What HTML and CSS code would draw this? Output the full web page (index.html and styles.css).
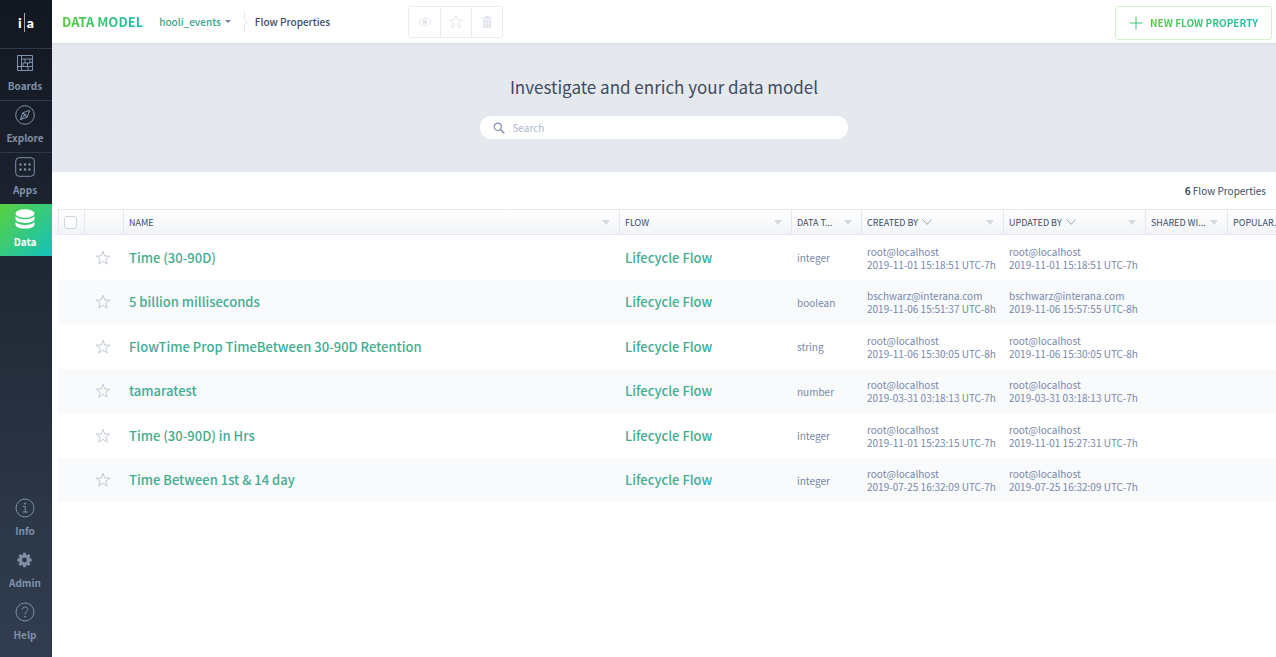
FILE: index.html
```
<!DOCTYPE html>
<html lang="en">
<head>
    <meta charset="UTF-8">
    <meta name="viewport" content="width=device-width, initial-scale=1.0">
    <title>Data Model - Flow Properties</title>
    <link rel="stylesheet" href="styles.css">
</head>
<body>
    <svg class="defs" aria-hidden="true">
        <symbol id="star" viewBox="0 0 16 16">
            <path d="M8 1.2l1.700 4.800 5.100.1-4 3.100 1.400 5L8 11.300l-4.200 2.900 1.400-5-4-3.100 5.100-.1z" fill="none" stroke="currentColor" stroke-width=".9"/>
        </symbol>
        <symbol id="chevron" viewBox="0 0 10 6">
            <path d="M.5.5L5 5.300 9.500.5" fill="none" stroke="currentColor" stroke-width=".9"/>
        </symbol>
        <linearGradient id="plus-fill" gradientUnits="userSpaceOnUse" x1="0" y1="0" x2="14" y2="14">
            <stop offset="0" stop-color="#5fd04a"/>
            <stop offset="1" stop-color="#1fbdb0"/>
        </linearGradient>
    </svg>

    <nav class="sidebar">
        <a class="logo" href="#" aria-label="Home">i<span class="logo-bar"></span>a</a>
        <a class="nav-item" href="#">
            <svg class="nav-icon" viewBox="0 0 20 20" fill="none" stroke="currentColor" stroke-width="1">
                <path d="M2.500 2.500h15v15h-15zM6.500 2.500v15M6.500 6h11M2.500 13.500h15M10 6v4h5V6M12.500 10v3.500M8 13.500V10h2M13 13.500v4M15 9.500h2.500"/>
            </svg>
            <span>Boards</span>
        </a>
        <a class="nav-item" href="#">
            <svg class="nav-icon" viewBox="0 0 20 20" fill="none" stroke="currentColor" stroke-width="1">
                <circle cx="10" cy="10" r="9.300"/>
                <path d="M14.700 5.300l-2.500 6.900-6.900 2.500 2.500-6.900zM7.800 7.800l4.400 4.400M5.300 14.700l4-4"/>
                <circle cx="10" cy="10" r="1"/>
            </svg>
            <span>Explore</span>
        </a>
        <a class="nav-item" href="#">
            <svg class="nav-icon" viewBox="0 0 20 20" fill="none" stroke="currentColor" stroke-width="1">
                <rect x=".7" y=".7" width="18.600" height="18.600" rx="3.500"/>
                <path d="M5.500 7.500h.01M10 7.500h.01M14.500 7.500h.01M5.500 12.500h.01M10 12.500h.01M14.500 12.500h.01" stroke-width="2.400" stroke-linecap="round"/>
            </svg>
            <span>Apps</span>
        </a>
        <a class="nav-item active" href="#">
            <svg class="nav-icon" viewBox="0 0 20 20" fill="currentColor">
                <ellipse cx="10" cy="4.500" rx="9.500" ry="4.300"/>
                <path d="M.5 7.300c1.600 2 5.300 3 9.500 3s7.900-1 9.500-3v2.400c0 2.400-4.300 4.200-9.500 4.200S.5 12.100.5 9.700z"/>
                <path d="M.5 13c1.600 2 5.300 3 9.500 3s7.900-1 9.500-3v2.400c0 2.400-4.300 4.200-9.500 4.200S.5 17.800.5 15.400z"/>
            </svg>
            <span>Data</span>
        </a>
        <div class="spacer"></div>
        <a class="nav-item plain" href="#">
            <svg class="nav-icon" viewBox="0 0 20 20" fill="none" stroke="currentColor" stroke-width="1">
                <circle cx="10" cy="10" r="9"/>
                <path d="M8 8.500h2.300v5.500M7.500 14h5.300"/>
                <circle cx="10" cy="5.700" r=".6" fill="currentColor"/>
            </svg>
            <span>Info</span>
        </a>
        <a class="nav-item plain" href="#">
            <svg class="nav-icon" viewBox="0 0 20 20">
                <circle cx="9.500" cy="10" r="4" fill="none" stroke="currentColor" stroke-width="3.200"/>
                <path d="M9.500 2.800v3M9.500 14.200v3M2.300 10h3M13.700 10h3M4.400 4.900l2 2M12.600 13.100l2 2M4.400 15.100l2-2M12.600 6.900l2-2" stroke="currentColor" stroke-width="2.800"/>
            </svg>
            <span>Admin</span>
        </a>
        <a class="nav-item plain" href="#">
            <svg class="nav-icon" viewBox="0 0 20 20" fill="none" stroke="currentColor" stroke-width="1">
                <circle cx="10" cy="10" r="9"/>
                <path d="M7.200 7.800c0-1.800 1.200-2.800 2.800-2.800s2.800 1 2.800 2.500c0 2-2.800 2-2.800 4.500"/>
                <circle cx="10" cy="14.500" r=".5" fill="currentColor"/>
            </svg>
            <span>Help</span>
        </a>
    </nav>

    <main class="main">
        <header class="topbar">
            <h1 class="title">DATA MODEL</h1>
            <button class="dataset" type="button">hooli_events<span class="caret"></span></button>
            <svg class="crumb-sep" viewBox="0 0 6 20" fill="none" stroke="currentColor"><path d="M1.500 0v7l3 3-3 3v7"/></svg>
            <span class="crumb">Flow Properties</span>
            <div class="tools">
                <button type="button" aria-label="View" disabled>
                    <svg viewBox="0 0 16 16">
                        <path d="M2 8c3-5 9-5 12 0-3 5-9 5-12 0z" fill="none" stroke="currentColor"/>
                        <circle cx="8" cy="8" r="2.300" fill="currentColor"/>
                    </svg>
                </button>
                <button type="button" aria-label="Favorite" disabled>
                    <svg viewBox="0 0 16 16"><use href="#star"/></svg>
                </button>
                <button type="button" aria-label="Delete" disabled>
                    <svg viewBox="0 0 16 16" fill="currentColor">
                        <path d="M3 3.200h3V2h4v1.200h3v1.600H3zM4 5.500h8V14H4z"/>
                        <path d="M6.300 6.500v6.300M9.700 6.500v6.300" stroke="#fff" stroke-width=".6"/>
                    </svg>
                </button>
            </div>
            <button class="new-btn" type="button">
                <svg viewBox="0 0 14 14"><path d="M7 .5v13M.5 7h13" fill="none" stroke="url(#plus-fill)"/></svg>
                <span>NEW FLOW PROPERTY</span>
            </button>
        </header>

        <section class="hero">
            <h2>Investigate and enrich your data model</h2>
            <label class="search">
                <svg viewBox="0 0 12 12" fill="none" stroke="currentColor">
                    <circle cx="4.800" cy="4.800" r="3.600" stroke-width="1.200"/>
                    <path d="M7.500 7.500l3.800 3.800" stroke-width="1.600"/>
                </svg>
                <input type="search" placeholder="Search" aria-label="Search">
            </label>
        </section>

        <p class="count"><strong>6</strong> Flow Properties</p>

        <div class="table-wrap">
            <table>
                <colgroup>
                    <col class="col-check">
                    <col class="col-star">
                    <col>
                    <col class="col-flow">
                    <col class="col-type">
                    <col class="col-user">
                    <col class="col-user">
                    <col class="col-shared">
                    <col class="col-shared">
                </colgroup>
                <thead>
                    <tr>
                        <th><input class="check" type="checkbox" aria-label="Select all"></th>
                        <th></th>
                        <th><div class="head"><span>NAME</span><i class="filter"></i></div></th>
                        <th><div class="head"><span>FLOW</span><i class="filter"></i></div></th>
                        <th><div class="head"><span>DATA T...</span><i class="filter"></i></div></th>
                        <th><div class="head"><span>CREATED BY</span><svg class="sort"><use href="#chevron"/></svg><i class="filter"></i></div></th>
                        <th><div class="head"><span>UPDATED BY</span><svg class="sort"><use href="#chevron"/></svg><i class="filter"></i></div></th>
                        <th><div class="head"><span>SHARED WI...</span><i class="filter"></i></div></th>
                        <th><div class="head"><span>POPULAR...</span><i class="filter"></i></div></th>
                    </tr>
                </thead>
                <tbody>
                    <tr>
                        <td></td>
                        <td><button class="star" type="button" aria-label="Favorite"><svg><use href="#star"/></svg></button></td>
                        <td><a href="#">Time (30-90D)</a></td>
                        <td><a href="#">Lifecycle Flow</a></td>
                        <td>integer</td>
                        <td>root@localhost<br>2019-11-01 15:18:51 UTC-7h</td>
                        <td>root@localhost<br>2019-11-01 15:18:51 UTC-7h</td>
                        <td></td>
                        <td></td>
                    </tr>
                    <tr>
                        <td></td>
                        <td><button class="star" type="button" aria-label="Favorite"><svg><use href="#star"/></svg></button></td>
                        <td><a href="#">5 billion milliseconds</a></td>
                        <td><a href="#">Lifecycle Flow</a></td>
                        <td>boolean</td>
                        <td>bschwarz@interana.com<br>2019-11-06 15:51:37 UTC-8h</td>
                        <td>bschwarz@interana.com<br>2019-11-06 15:57:55 UTC-8h</td>
                        <td></td>
                        <td></td>
                    </tr>
                    <tr>
                        <td></td>
                        <td><button class="star" type="button" aria-label="Favorite"><svg><use href="#star"/></svg></button></td>
                        <td><a href="#">FlowTime Prop TimeBetween 30-90D Retention</a></td>
                        <td><a href="#">Lifecycle Flow</a></td>
                        <td>string</td>
                        <td>root@localhost<br>2019-11-06 15:30:05 UTC-8h</td>
                        <td>root@localhost<br>2019-11-06 15:30:05 UTC-8h</td>
                        <td></td>
                        <td></td>
                    </tr>
                    <tr>
                        <td></td>
                        <td><button class="star" type="button" aria-label="Favorite"><svg><use href="#star"/></svg></button></td>
                        <td><a href="#">tamaratest</a></td>
                        <td><a href="#">Lifecycle Flow</a></td>
                        <td>number</td>
                        <td>root@localhost<br>2019-03-31 03:18:13 UTC-7h</td>
                        <td>root@localhost<br>2019-03-31 03:18:13 UTC-7h</td>
                        <td></td>
                        <td></td>
                    </tr>
                    <tr>
                        <td></td>
                        <td><button class="star" type="button" aria-label="Favorite"><svg><use href="#star"/></svg></button></td>
                        <td><a href="#">Time (30-90D) in Hrs</a></td>
                        <td><a href="#">Lifecycle Flow</a></td>
                        <td>integer</td>
                        <td>root@localhost<br>2019-11-01 15:23:15 UTC-7h</td>
                        <td>root@localhost<br>2019-11-01 15:27:31 UTC-7h</td>
                        <td></td>
                        <td></td>
                    </tr>
                    <tr>
                        <td></td>
                        <td><button class="star" type="button" aria-label="Favorite"><svg><use href="#star"/></svg></button></td>
                        <td><a href="#">Time Between 1st &amp; 14 day</a></td>
                        <td><a href="#">Lifecycle Flow</a></td>
                        <td>integer</td>
                        <td>root@localhost<br>2019-07-25 16:32:09 UTC-7h</td>
                        <td>root@localhost<br>2019-07-25 16:32:09 UTC-7h</td>
                        <td></td>
                        <td></td>
                    </tr>
                </tbody>
            </table>
        </div>
    </main>
</body>
</html>
```
FILE: styles.css
```
* {
    box-sizing: border-box;
}
body {
    margin: 0;
    display: flex;
    min-height: 100vh;
    font-family: "Noto Sans CJK SC", "Noto Sans", sans-serif;
    font-size: 10px;
    line-height: 13px;
    color: #3d4c63;
    background-color: #fff;
}
button, input {
    font: inherit;
    color: inherit;
}
a {
    text-decoration: none;
}
.defs {
    position: absolute;
    width: 0;
    height: 0;
}

/* sidebar */
.sidebar {
    flex: none;
    width: 52px;
    min-height: 100vh;
    padding-bottom: 8px;
    display: flex;
    flex-direction: column;
    background: linear-gradient(#121721, #1d2531 35%, #2c3747 80%, #313c50);
}
.logo {
    height: 48px;
    padding-bottom: 4px;
    display: flex;
    align-items: center;
    justify-content: center;
    gap: 2px;
    color: #fff;
    font-family: Lato, sans-serif;
    font-size: 14px;
    font-weight: 900;
}
.logo-bar {
    width: 1px;
    height: 19px;
    background-color: #a4a8b0;
}
.nav-item {
    height: 52px;
    padding: 4px 2px 0 0;
    border-top: 1px solid #2f3949;
    display: flex;
    flex-direction: column;
    align-items: center;
    gap: 5px;
    color: #7f90a9;
    font-weight: bold;
    line-height: 16px;
}
.nav-item.plain {
    border-color: transparent;
}
.nav-item.active {
    border-color: transparent;
    color: #fff;
    background: linear-gradient(135deg, #5ad13f, #12c2bd) border-box;
}
.nav-icon {
    width: 20px;
    height: 20px;
}
.spacer {
    flex: 1;
}

.main {
    flex: 1;
    min-width: 0;
}

/* top bar */
.topbar {
    height: 43px;
    padding: 0 4px 0 10px;
    display: flex;
    align-items: center;
    font-weight: 500;
}
.title,
.new-btn span {
    color: transparent;
    background: linear-gradient(90deg, #50ce3c, #1bbcb0);
    background-clip: text;
    -webkit-background-clip: text;
}
.title {
    margin: 0;
    font-size: 13px;
    line-height: 20px;
}
.dataset {
    margin-left: 16px;
    padding: 0;
    border: 0;
    background: none;
    display: flex;
    align-items: center;
    gap: 4px;
    color: #36a58a;
}
.caret {
    border: 3px solid transparent;
    border-top-color: #71829c;
    border-bottom: 0;
}
.crumb-sep {
    width: 6px;
    height: 20px;
    margin: 0 6px 0 12px;
    color: #e3e7ed;
}
.tools {
    display: flex;
    height: 32px;
    margin-left: 78px;
    border: 1px solid #e9ecf1;
    border-radius: 3px;
}
.tools button {
    width: 31px;
    padding: 0;
    border: 0;
    background: none;
    display: grid;
    place-items: center;
    color: #e2e6ed;
}
.tools button + button {
    border-left: 1px solid #e9ecf1;
}
.tools svg {
    width: 16px;
    height: 16px;
}
.new-btn {
    height: 34px;
    margin-top: 2px;
    margin-left: auto;
    padding: 0 13px;
    border: 1px solid #d3f2ca;
    border-radius: 3px;
    background: none;
    display: flex;
    align-items: center;
    gap: 7px;
    font-weight: bold;
}
.new-btn svg {
    width: 14px;
    height: 14px;
}

/* search banner */
.hero {
    height: 129px;
    padding-top: 30px;
    display: flex;
    flex-direction: column;
    align-items: center;
    gap: 16px;
    background-color: #e5e8ed;
    box-shadow: inset 0 3px 3px -2px #d7dce3;
}
.hero h2 {
    margin: 0;
    font-size: 17px;
    font-weight: normal;
    line-height: 27px;
}
.search {
    width: 30%;
    height: 23px;
    padding: 0 13px;
    border-radius: 12px;
    background-color: #fff;
    display: flex;
    align-items: center;
    gap: 7px;
    color: #8391b3;
}
.search svg {
    width: 12px;
    height: 12px;
}
.search input {
    flex: 1;
    min-width: 0;
    padding: 0;
    border: 0;
    outline: 0;
    background: none;
}
.search input::placeholder {
    color: #adb8cc;
}

.count {
    height: 37px;
    margin: 0;
    padding: 0 10px;
    text-align: right;
    line-height: 38px;
}

/* table */
.table-wrap {
    padding-left: 6px;
    overflow: hidden;
    background: linear-gradient(#fff, #f2f4f8) no-repeat 0 0 / 100% 26px;
}
table {
    width: calc(100% + 33px);
    table-layout: fixed;
    border-collapse: separate;
    border-spacing: 0;
}
.col-check {
    width: 26px;
}
.col-star {
    width: 39px;
}
.col-flow {
    width: 172px;
}
.col-type {
    width: 70px;
}
.col-user {
    width: 142px;
}
.col-shared {
    width: 82px;
}
th {
    height: 26px;
    padding: 0 0 0 5px;
    border: 1px solid #e4e7ed;
    border-right: 0;
    background: linear-gradient(#fff, #f2f4f8);
    text-align: left;
    font-size: 9px;
    font-weight: normal;
}
.head {
    display: flex;
    align-items: center;
    gap: 4px;
    padding-right: 9px;
    white-space: nowrap;
}
.filter {
    flex: none;
    margin-left: auto;
    border: 4px solid transparent;
    border-top: 5px solid #d3d8e1;
    border-bottom: 0;
}
.sort {
    flex: none;
    width: 10px;
    height: 6px;
    color: #8e99ad;
}
.check {
    appearance: none;
    display: block;
    width: 13px;
    height: 13px;
    margin: 0;
    border: 1px solid #cfd6e0;
    border-radius: 3px;
    background-color: #fff;
}
td {
    height: 45px;
    padding: 0 0 0 6px;
    color: #7888a8;
    white-space: nowrap;
}
tbody tr:nth-child(even) {
    background-color: #f8fafc;
}
tbody tr:nth-child(even) td {
    height: 44px;
}
td a {
    color: #43ad93;
    font-size: 13px;
    font-weight: 500;
    line-height: 20px;
}
.star {
    display: block;
    margin-left: 5px;
    padding: 0;
    border: 0;
    background: none;
    color: #bcc4d2;
}
.star svg {
    display: block;
    width: 16px;
    height: 16px;
}
```
